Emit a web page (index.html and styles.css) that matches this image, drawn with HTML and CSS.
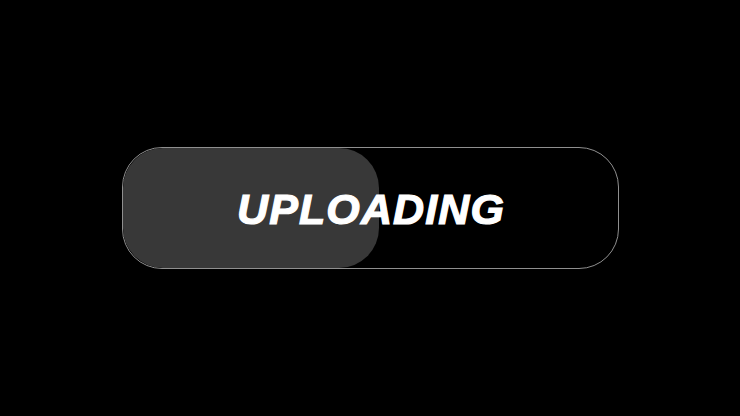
FILE: index.html
```html
<!DOCTYPE html>
<html>
<head>
<meta charset="utf-8">
<link rel="stylesheet" href="styles.css">
</head>
<body>
<div class="stage">
  <div class="pill">
    <div class="fill" style="width:256px"></div>
    <div class="label">UPLOADING</div>
  </div>
</div>
</body>
</html>
```
FILE: styles.css
```css
html, body {
  margin: 0;
  padding: 0;
  background: #000;
  width: 740px;
  height: 416px;
  overflow: hidden;
}
.stage {
  width: 740px;
  height: 416px;
  display: flex;
  align-items: center;
  justify-content: center;
}
.pill {
  box-sizing: border-box;
  width: 497px;
  height: 122px;
  border: 1px solid #8f8f8f;
  border-radius: 40px;
  display: grid;
  grid-template: 1fr / 1fr;
  overflow: hidden;
}
.fill {
  grid-area: 1 / 1;
  justify-self: start;
  height: 100%;
  background: #383838;
  border-radius: 40px;
}
.label {
  grid-area: 1 / 1;
  align-self: center;
  justify-self: center;
  font-family: "Liberation Sans", Arial, sans-serif;
  font-weight: bold;
  font-style: italic;
  font-size: 43px;
  letter-spacing: 1.1px;
  -webkit-text-stroke: 1.2px #fff;
  color: #fff;
  line-height: 1;
  position: relative;
  top: 1px;
  left: 1px;
}
```
